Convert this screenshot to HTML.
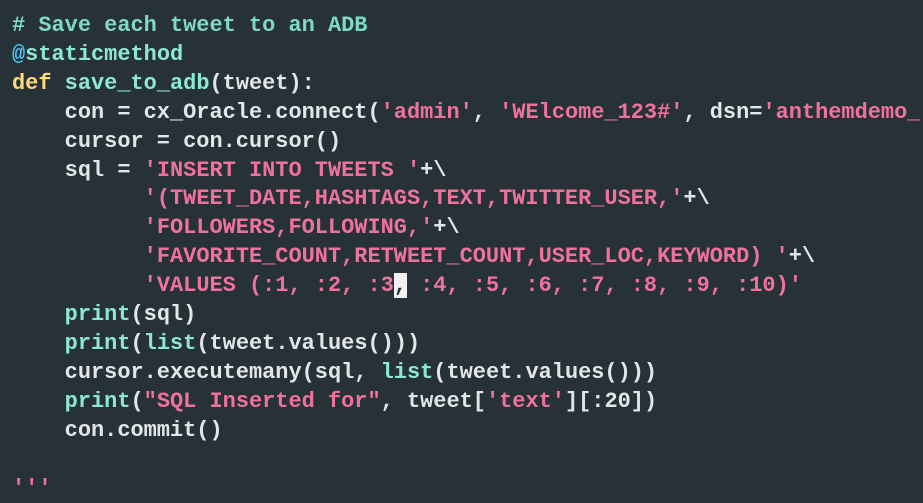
<!DOCTYPE html>
<html><head><meta charset="utf-8"><style>
html,body{margin:0;padding:0;background:#263238;width:923px;height:495px;overflow:hidden}
pre{margin:0;position:absolute;left:12px;top:12px;font-family:"Liberation Mono",monospace;font-size:21.95px;line-height:28.9px;color:#e3e6e8;font-weight:bold}
.c{color:#80d8c8;font-weight:bold}
.a{color:#4fc3f7}
.k{color:#ffd97a}
.f{color:#8ce8d4}
.s{color:#f0729c}
.cur{background:#f2f2f2;color:#263238}
</style></head><body><pre><span class="c"># Save each tweet to an ADB</span>
<span class="a">@</span><span class="f">staticmethod</span>
<span class="k">def</span> <span class="f">save_to_adb</span>(tweet):
    con = cx_Oracle.connect(<span class="s">'admin'</span>, <span class="s">'WElcome_123#'</span>, dsn=<span class="s">'anthemdemo_</span>
    cursor = con.cursor()
    sql = <span class="s">'INSERT INTO TWEETS '</span>+\
          <span class="s">'(TWEET_DATE,HASHTAGS,TEXT,TWITTER_USER,'</span>+\
          <span class="s">'FOLLOWERS,FOLLOWING,'</span>+\
          <span class="s">'FAVORITE_COUNT,RETWEET_COUNT,USER_LOC,KEYWORD) '</span>+\
          <span class="s">'VALUES (:1, :2, :3<span class="cur">,</span> :4, :5, :6, :7, :8, :9, :10)'</span>
    <span class="f">print</span>(sql)
    <span class="f">print</span>(<span class="f">list</span>(tweet.values()))
    cursor.executemany(sql, <span class="f">list</span>(tweet.values()))
    <span class="f">print</span>(<span class="s">"SQL Inserted for"</span>, tweet[<span class="s">'text'</span>][:20])
    con.commit()

<span class="s">'''</span></pre></body></html>
